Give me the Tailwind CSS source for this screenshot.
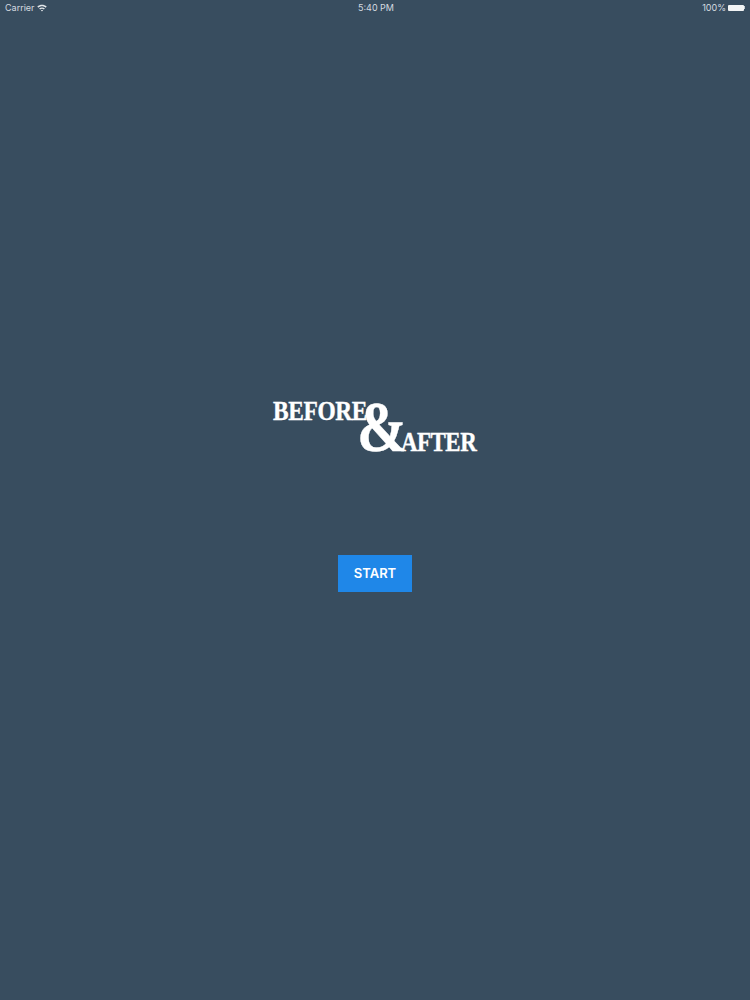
<!DOCTYPE html>
<html>
<head>
<meta charset="utf-8">
<script src="https://cdn.jsdelivr.net/npm/@tailwindcss/browser@4"></script>
</head>
<body class="m-0">
<div class="w-[750px] h-[1000px] bg-[#384d5f] flex flex-col font-['Inter','Liberation_Sans',sans-serif] overflow-hidden">
  <div class="h-[15px] px-[5px] flex items-center justify-between text-[9px] text-[#d5dbe0] relative">
    <div class="flex items-center gap-[2px]">
      <span>Carrier</span>
      <svg width="10" height="8" viewBox="0 0 10 8"><path d="M0.3 2.6C3 0 7 0 9.7 2.6L8.7 3.7C6.5 1.7 3.5 1.7 1.3 3.7Z M2.1 4.5C3.8 3 6.2 3 7.9 4.5L6.9 5.5C5.8 4.6 4.2 4.6 3.1 5.5Z M3.9 6.3C4.5 5.8 5.5 5.8 6.1 6.3L5 7.6Z" fill="#e3e7ea"/></svg>
    </div>
    <span class="absolute left-[358px] top-[2px] leading-[11px]">5:40 PM</span>
    <div class="flex items-center gap-[2px]">
      <span>100%</span>
      <div class="flex items-center">
        <div class="w-[16px] h-[6px] bg-[#f2f4f5] rounded-[1px]"></div>
        <div class="w-[1px] h-[3px] bg-[#c5ccd2]"></div>
      </div>
    </div>
  </div>
  <div class="pt-[385px] flex justify-center">
    <div class="relative w-[206px] h-[70px] text-white font-bold font-['Liberation_Serif',serif] shrink-0 [-webkit-text-stroke:0.4px_white]">
      <span class="absolute left-[1px] top-[-4px] text-[27px] leading-[30px] tracking-[-0.4px] origin-left scale-x-[0.865]">BEFORE</span>
      <span class="absolute left-[85px] top-[-9px] text-[72px] leading-[72px] origin-left scale-x-[0.83]">&amp;</span>
      <span class="absolute left-[129px] top-[27px] text-[27px] leading-[30px] tracking-[-0.6px] origin-left scale-x-[0.85]">AFTER</span>
    </div>
  </div>
  <div class="pt-[85px] flex justify-center">
    <button class="w-[74px] h-[37px] bg-[#1f87e8] text-white text-[13px] font-semibold flex items-center justify-center">START</button>
  </div>
</div>
</body>
</html>
